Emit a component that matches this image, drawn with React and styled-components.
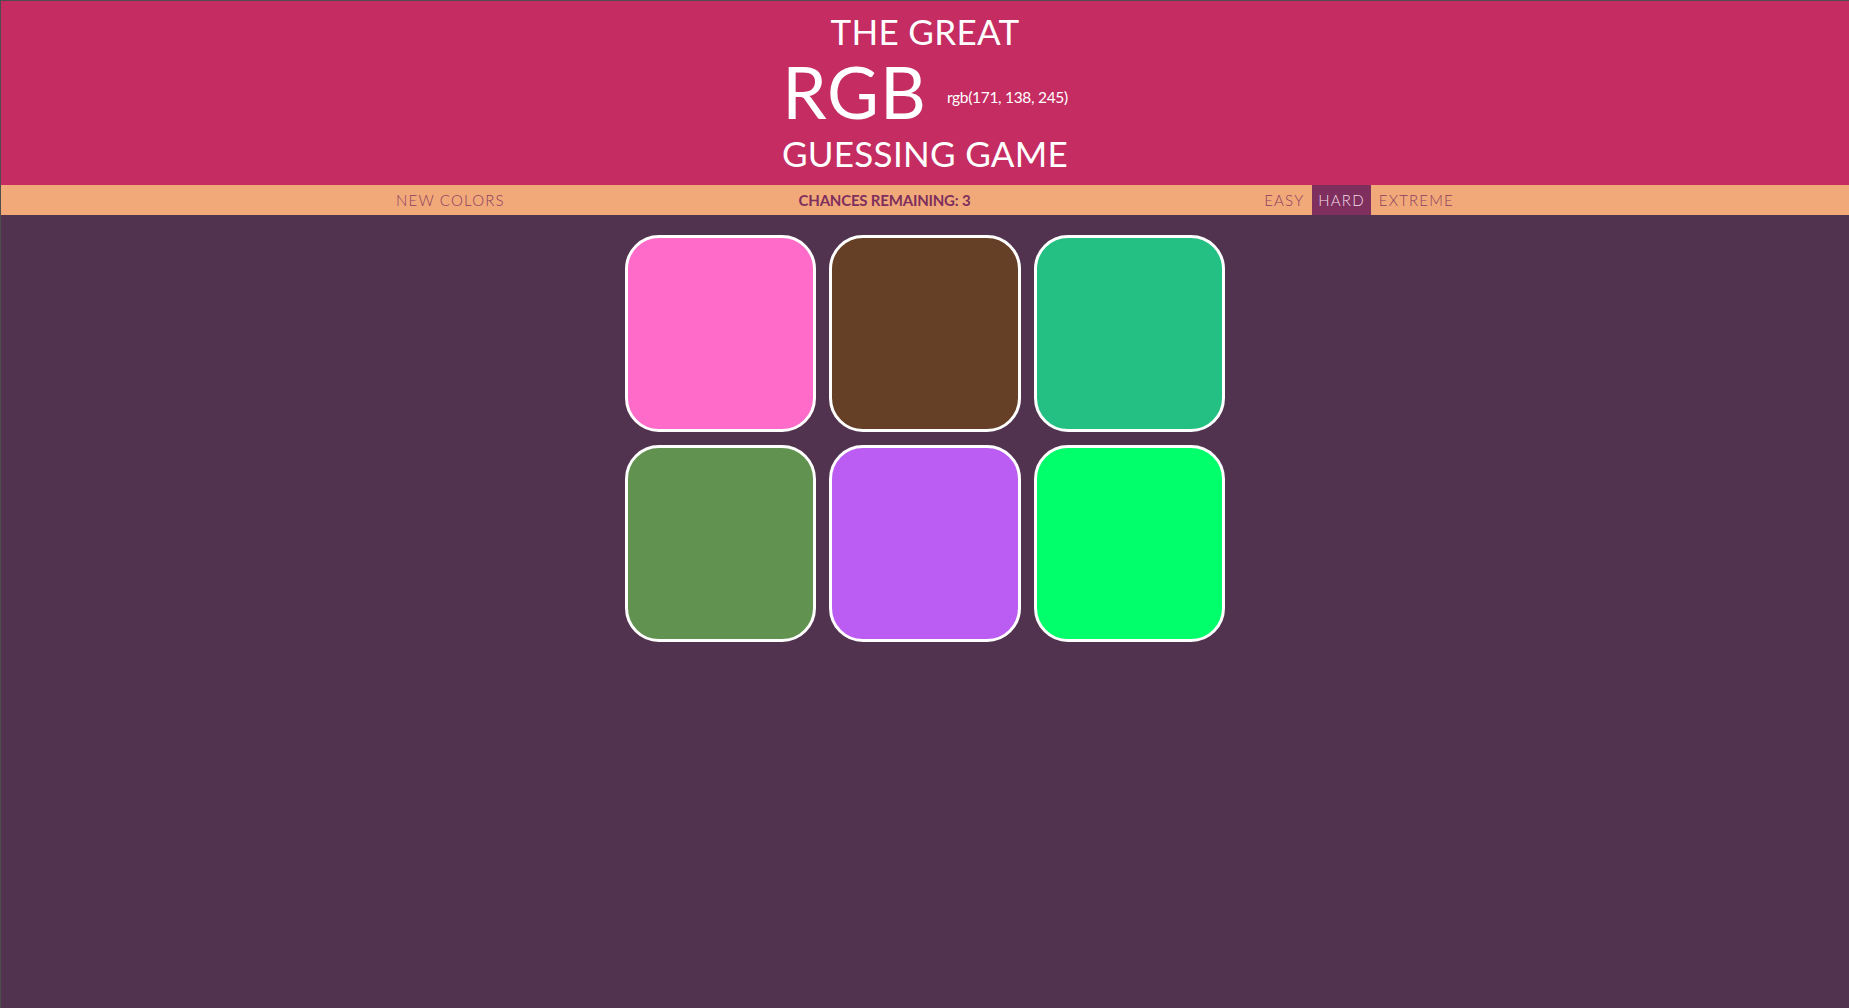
import React, { useState } from 'react'
import styled, { createGlobalStyle } from 'styled-components'

const GlobalStyle = createGlobalStyle`
  html, body {
    margin: 0;
    padding: 0;
    height: 100%;
    background: #51324f;
  }
  #root {
    height: 100%;
  }
  * { box-sizing: border-box; }
`;

const Page = styled.div`
  min-height: 100vh;
  background: #51324f;
  border-top: 1px solid #4d4d4d;
  border-left: 1px solid #4d4d4d;
  font-family: Lato, "Open Sans", sans-serif;
`;

const Header = styled.header`
  height: 184px;
  background: #c42c62;
  color: #fff;
  text-align: center;
  display: flex;
  flex-direction: column;
  align-items: center;
  padding-top: 9px;
`;

const Line = styled.div`
  font-size: 35px;
  line-height: 42px;
  font-weight: 400;
  letter-spacing: 0.3px;
`;

const MidLine = styled.div`
  display: flex;
  align-items: center;
  gap: 20px;
  height: 76px;
  margin-top: 2px;
  margin-bottom: 2px;
`;

const Big = styled.span`
  font-size: 71px;
  line-height: 72px;
  letter-spacing: 1px;
`;

const Target = styled.span`
  font-size: 15.5px;
  margin-top: 10px;
  letter-spacing: -0.3px;
`;

const Bar = styled.nav`
  height: 30px;
  background: #f2a979;
  display: flex;
  justify-content: center;
`;

const BarInner = styled.div`
  width: 1100px;
  display: flex;
  align-items: stretch;
`;

const NavButton = styled.button`
  border: none;
  background: ${p => (p.$active ? '#7e2f5d' : 'transparent')};
  color: ${p => (p.$active ? '#f3dcea' : '#8a3d63')};
  font-family: Lato, "Open Sans", sans-serif;
  font-size: 15px;
  font-weight: 300;
  letter-spacing: 1.2px;
  text-transform: uppercase;
  padding: 0 6px;
  cursor: pointer;
  height: 100%;
`;

const NewButton = styled(NavButton)`
  margin-left: 15px;
`;

const Status = styled.div`
  flex: 1;
  display: flex;
  align-items: center;
  justify-content: center;
  color: #7e2f5d;
  font-size: 15px;
  font-weight: 700;
  letter-spacing: -0.2px;
  text-transform: uppercase;
`;

const Modes = styled.div`
  display: flex;
  gap: 2px;
  margin-right: 15px;
`;

const Board = styled.main`
  display: flex;
  justify-content: center;
  padding-top: 20px;
`;

const Grid = styled.div`
  width: 600px;
  display: grid;
  grid-template-columns: repeat(3, 1fr);
  column-gap: 13px;
  row-gap: 13px;
`;

const Square = styled.div`
  height: 197px;
  border: 3px solid #fff;
  border-radius: 34px;
  background: ${p => p.$color};
  cursor: pointer;
`;

const colors = [
  '#ff6bc8',
  '#654026',
  '#24bf83',
  '#62924f',
  '#bb5cf2',
  '#00ff6a',
];

const App = () => {
  const [mode, setMode] = useState('hard');
  return (
    <Page>
      <GlobalStyle />
      <Header>
        <Line>THE GREAT</Line>
        <MidLine>
          <Big>RGB</Big>
          <Target>rgb(171, 138, 245)</Target>
        </MidLine>
        <Line>GUESSING GAME</Line>
      </Header>
      <Bar>
        <BarInner>
          <NewButton>New Colors</NewButton>
          <Status>Chances remaining: 3</Status>
          <Modes>
            {['easy', 'hard', 'extreme'].map(m => (
              <NavButton key={m} $active={mode === m} onClick={() => setMode(m)}>
                {m}
              </NavButton>
            ))}
          </Modes>
        </BarInner>
      </Bar>
      <Board>
        <Grid>
          {colors.map(c => (
            <Square key={c} $color={c} />
          ))}
        </Grid>
      </Board>
    </Page>
  )
}

export default App
